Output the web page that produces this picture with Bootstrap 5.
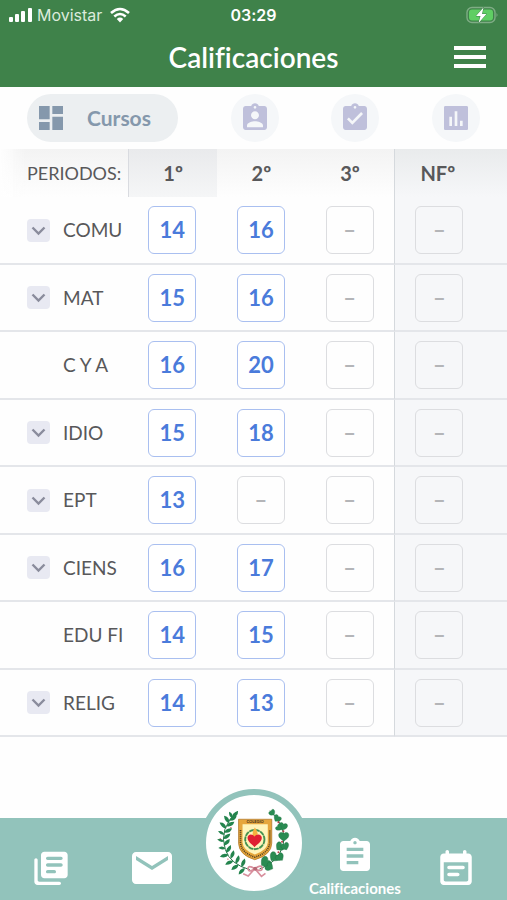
<!DOCTYPE html>
<html lang="es">
<head>
<meta charset="utf-8">
<meta name="viewport" content="width=device-width, initial-scale=1">
<title>Calificaciones</title>
<link href="https://cdn.jsdelivr.net/npm/bootstrap@5.3.0/dist/css/bootstrap.min.css" rel="stylesheet">
<style>
  body { font-family: Lato, "Liberation Sans", sans-serif; font-variant-ligatures: none; background: #fefefe; color: #58585a; }
  svg { display: block; }
  .app-header { background: #3f824a; color: #fff; height: 87px; }
  .status-bar { font-family: Inter, "Liberation Sans", sans-serif; font-size: 16px; line-height: 30px; height: 30px; padding: 0 9px; }
  .status-side { flex: 1 1 0; }
  .carrier { color: #dcebdc; }
  .clock { font-weight: 600; }
  .title-row { height: 54px; padding: 0 21px; }
  .title-side { flex: 1 1 0; }
  .app-title { font-size: 28px; line-height: 32px; font-weight: 600; }
  .bare-btn { background: none; border: 0; padding: 0; color: inherit; }
  .view-tabs { height: 62px; padding: 0 27px; }
  .view-pill { height: 48px; width: 151px; padding: 0 8px; gap: 20px; border: 0; border-radius: 24px; background: #eceff1; color: #8598ac; font-size: 21px; line-height: 24px; font-weight: 700; }
  .view-dot { width: 48px; height: 48px; border: 0; border-radius: 50%; background: #f5f7f9; color: #bfc0db; padding: 8px; }
  .grades { table-layout: fixed; width: 100%; border-collapse: separate; border-spacing: 0; }
  .grades .col-name { width: 25.3%; }
  .grades .col-term { width: 17.5%; }
  .grades thead th { height: 48px; padding: 0; font-size: 20px; line-height: 24px; font-weight: 700; text-align: center; background: linear-gradient(#f3f3f3, #fefefe); }
  .grades thead th.periods { font-weight: 400; font-size: 18px; text-align: left; padding-left: 27px; white-space: nowrap; background: linear-gradient(90deg, #fefefe, transparent 20%), linear-gradient(#f3f3f3, #fefefe); }
  .grades thead th.current { border-left: 1px solid #d9dbe0; background: linear-gradient(#e9eaec, #f5f6f7); }
  .grades thead th.final { border-left: 1px solid #d5d9dd; background: linear-gradient(#e9ebec, #f6f7f9); text-align: left; padding-left: 25px; }
  .grades tbody td, .grades tbody th { height: 67px; padding: 0; border-bottom: 2px solid #e4e6ea; vertical-align: middle; }
  .grades tbody tr:nth-child(odd) > * { height: 68px; }
  .grades tbody td { padding-left: 20px; }
  .grades tbody td.final { border-left: 1px solid #d5d9dd; background: #f6f7f9; }
  .course { padding-left: 27px; padding-right: 5px; gap: 13px; font-size: 19px; line-height: 24px; font-weight: 400; }
  .course-name { overflow: hidden; white-space: nowrap; flex: 1 1 0; }
  .expander { width: 23px; height: 23px; flex: none; border-radius: 4px; background: #e8e9f2; color: #8a8c9c; }
  .grade { display: flex; align-items: center; justify-content: center; width: 48px; height: 48px; border: 1px solid #a9bff0; border-radius: 6px; background: #fff; color: #4a7bdb; font-size: 22px; line-height: 24px; font-weight: 700; }
  .grade.empty { border-color: #dcdde0; background: transparent; color: #b4b5b8; }
  .tab-bar { background: #92c3bb; color: #fff; height: 82px; }
  .tab-bar a { color: #fff; text-decoration: none; flex: 1 1 0; min-width: 0; height: 82px; }
  .tab-label { font-size: 15px; line-height: 16px; font-weight: 700; }
  .crest { width: 108px; height: 108px; flex: none; margin-top: -29px; border: 6px solid #92c3bb; border-radius: 50%; background: #fff; }
</style>
<script src="https://cdn.jsdelivr.net/npm/bootstrap@5.3.0/dist/js/bootstrap.bundle.min.js"></script>
</head>
<body>
<div class="d-flex flex-column min-vh-100">
  <header class="app-header">
    <div class="status-bar d-flex align-items-center">
      <div class="status-side d-flex align-items-center">
        <svg width="24" height="16" viewBox="0 0 24 16" fill="#fff" aria-hidden="true"><rect x="0" y="10" width="4" height="5" rx="1"/><rect x="6" y="7" width="4" height="8" rx="1"/><rect x="12" y="4" width="4" height="11" rx="1"/><rect x="19" y="1" width="4" height="14" rx="1"/></svg>
        <span class="carrier ms-1">Movistar</span>
        <svg class="ms-2" width="20" height="16" viewBox="0 0 20 16" fill="none" stroke="#fff" stroke-width="2.6" aria-hidden="true"><path d="M1 6q9-8 18 0M4.300 9.500q5.700-5 11.400 0"/><path d="M6.800 12q3.200-2.800 6.400 0L10 15.500z" fill="#fff" stroke="none"/></svg>
      </div>
      <span class="clock">03:29</span>
      <div class="status-side d-flex justify-content-end">
        <svg width="32" height="18" viewBox="0 0 32 18" aria-hidden="true"><rect x="1" y="1.500" width="28" height="15" rx="5" fill="none" stroke="#7fac85" stroke-width="1.400"/><rect x="3" y="3.500" width="24" height="11" rx="3" fill="#5fce63"/><path d="M30.500 7v4q2-2 0-4z" fill="#7fac85"/><path d="M17.500 1.500 10 10h4.500l-2 7L20.500 8H16z" fill="#fff" stroke="#3f824a" stroke-width="1" paint-order="stroke"/></svg>
      </div>
    </div>
    <div class="title-row d-flex align-items-center">
      <div class="title-side"></div>
      <h1 class="app-title m-0">Calificaciones</h1>
      <div class="title-side d-flex justify-content-end">
        <button class="bare-btn" type="button" aria-label="Menú"><svg width="32" height="24" viewBox="0 0 32 24" fill="currentColor"><path d="M0 1h32v4H0zM0 10h32v4H0zM0 19h32v4H0z"/></svg></button>
      </div>
    </div>
  </header>

  <nav class="view-tabs d-flex align-items-center justify-content-between" aria-label="Vistas">
    <button class="view-pill d-flex align-items-center" type="button"><svg width="32" height="32" viewBox="0 0 24 24" fill="currentColor"><path d="M3 13h8V3H3v10zm0 8h8v-6H3v6zm10 0h8V11h-8v10zm0-18v6h8V3h-8z"/></svg>Cursos</button>
    <button class="view-dot" type="button" aria-label="Alumno"><svg width="32" height="32" viewBox="0 0 24 24" fill="currentColor"><path d="M19 3h-4.180C14.400 1.840 13.300 1 12 1c-1.300 0-2.400.84-2.820 2H5c-1.100 0-2 .9-2 2v14c0 1.100.9 2 2 2h14c1.100 0 2-.9 2-2V5c0-1.100-.9-2-2-2zm-7 0c.55 0 1 .45 1 1s-.45 1-1 1-1-.45-1-1 .45-1 1-1zm0 4c1.660 0 3 1.340 3 3s-1.340 3-3 3-3-1.340-3-3 1.340-3 3-3zm6 12H6v-1.400c0-2 4-3.100 6-3.100s6 1.100 6 3.100V19z"/></svg></button>
    <button class="view-dot" type="button" aria-label="Tareas"><svg width="32" height="32" viewBox="0 0 24 24" fill="currentColor"><path d="M19 3h-4.180C14.400 1.840 13.300 1 12 1c-1.300 0-2.400.84-2.820 2H5c-1.100 0-2 .9-2 2v14c0 1.100.9 2 2 2h14c1.100 0 2-.9 2-2V5c0-1.100-.9-2-2-2zm-7 0c.55 0 1 .45 1 1s-.45 1-1 1-1-.45-1-1 .45-1 1-1zm-2 14l-4-4 1.410-1.410L10 14.170l6.590-6.590L18 9l-8 8z"/></svg></button>
    <button class="view-dot" type="button" aria-label="Estadísticas"><svg width="32" height="32" viewBox="0 0 24 24" fill="currentColor"><path d="M20 3H4c-.55 0-1 .45-1 1v16c0 .55.450 1 1 1h16c.55 0 1-.45 1-1V4c0-.55-.45-1-1-1zM9 18H7v-7h2v7zm4 0h-2V7h2v11zm4 0h-2v-4h2v4z"/></svg></button>
  </nav>

  <main>
    <table class="grades">
      <colgroup><col class="col-name"><col class="col-term"><col class="col-term"><col class="col-term"><col></colgroup>
      <thead><tr><th class="periods" scope="col">PERIODOS:</th><th class="current" scope="col">1º</th><th scope="col">2º</th><th scope="col">3º</th><th class="final" scope="col">NFº</th></tr></thead>
      <tbody id="gradeRows"></tbody>
    </table>
  </main>

  <nav class="tab-bar d-flex mt-auto" aria-label="Principal">
    <a href="#" class="d-flex justify-content-center align-items-end pb-2" aria-label="Noticias"><svg width="40" height="44" viewBox="0 0 24 26" fill="currentColor"><path d="M3 6c-.55 0-1 .45-1 1v13c0 1.100.9 2 2 2h13c.55 0 1-.45 1-1s-.45-1-1-1H5c-.55 0-1-.45-1-1V7c0-.55-.45-1-1-1zm17-4H8c-1.100 0-2 .9-2 2v12c0 1.100.9 2 2 2h12c1.100 0 2-.9 2-2V4c0-1.100-.9-2-2-2zm-2 9h-8c-.55 0-1-.45-1-1s.45-1 1-1h8c.55 0 1 .45 1 1s-.45 1-1 1zm-4 4h-4c-.55 0-1-.45-1-1s.45-1 1-1h4c.55 0 1 .45 1 1s-.45 1-1 1zm4-8h-8c-.55 0-1-.45-1-1s.45-1 1-1h8c.55 0 1 .45 1 1s-.45 1-1 1z"/></svg></a>
    <a href="#" class="d-flex justify-content-center align-items-end pb-2" aria-label="Mensajes"><svg width="48" height="48" viewBox="0 0 24 24" fill="currentColor"><path d="M20 4H4c-1.100 0-2 .9-2 2v12c0 1.100.9 2 2 2h16c1.100 0 2-.9 2-2V6c0-1.100-.9-2-2-2zm0 4l-8 5-8-5V6l8 5 8-5v2z"/></svg></a>
    <a href="#" class="d-flex justify-content-center" aria-label="Inicio"><span class="crest">
      <svg width="96" height="96" viewBox="33 45 289 289" aria-hidden="true">
        <defs>
          <path id="leafLong" d="M-1 0Q5-13 24-10Q17 6-1 0z" fill="#23844d"/>
          <path id="leafWide" d="M0 15C-8 9-17 4-15-6C-12-13-4-13 0-7C4-13 13-13 15-6C17 4 8 9 0 15z" fill="#2a8b52" stroke="#196a3b" stroke-width="1"/>
        </defs>
        <path d="M128 94Q70 145 91 209Q105 253 165 270" fill="none" stroke="#2b7247" stroke-width="3"/>
        <g>
          <use href="#leafLong" transform="translate(112 112) rotate(-25)"/><use href="#leafLong" transform="translate(112 114) rotate(-95) scale(.8)"/>
          <use href="#leafLong" transform="translate(104 122) rotate(-12)"/><use href="#leafLong" transform="translate(103 128) rotate(-105)"/>
          <use href="#leafLong" transform="translate(96 139) rotate(-8)"/><use href="#leafLong" transform="translate(94 144) rotate(-118)"/>
          <use href="#leafLong" transform="translate(89 158) rotate(-8)"/><use href="#leafLong" transform="translate(88 163) rotate(-132) scale(.8)"/>
          <use href="#leafLong" transform="translate(86 177) rotate(-16)"/><use href="#leafLong" transform="translate(87 184) rotate(-144) scale(.8)"/>
          <use href="#leafLong" transform="translate(87 197) rotate(-25)"/><use href="#leafLong" transform="translate(91 205) rotate(-157) scale(.8)"/>
          <use href="#leafLong" transform="translate(95 218) rotate(-38)"/><use href="#leafLong" transform="translate(100 225) rotate(-170)"/>
          <use href="#leafLong" transform="translate(108 236) rotate(-48)"/><use href="#leafLong" transform="translate(114 243) rotate(175)"/>
          <use href="#leafLong" transform="translate(124 251) rotate(-50)"/><use href="#leafLong" transform="translate(130 255) rotate(165)"/>
          <use href="#leafLong" transform="translate(141 261) rotate(-48)"/><use href="#leafLong" transform="translate(149 265) rotate(155)"/>
        </g>
        <path d="M226 92Q280 145 265 197Q250 248 194 268" fill="none" stroke="#2b7247" stroke-width="3"/>
        <g>
          <use href="#leafWide" transform="translate(232 98) rotate(-40) scale(.65)"/><use href="#leafWide" transform="translate(248 115) rotate(35) scale(.75)"/>
          <use href="#leafWide" transform="translate(265 139) rotate(15) scale(.85)"/><use href="#leafWide" transform="translate(252 143) rotate(-50) scale(.65)"/>
          <use href="#leafWide" transform="translate(267 169) scale(1)"/><use href="#leafWide" transform="translate(256 200) rotate(45) scale(.9)"/>
          <use href="#leafWide" transform="translate(271 199) rotate(-25) scale(.8)"/><use href="#leafWide" transform="translate(239 231) rotate(42) scale(1)"/>
          <use href="#leafWide" transform="translate(255 232) rotate(-40) scale(.85)"/><use href="#leafWide" transform="translate(213 247) rotate(50) scale(1.100)"/>
          <use href="#leafWide" transform="translate(223 261) rotate(-60) scale(.85)"/>
        </g>
        <g fill="#b83c45"><circle cx="108" cy="143" r="2"/><circle cx="76" cy="177" r="2"/><circle cx="99" cy="238" r="2"/><circle cx="251" cy="127" r="3"/><circle cx="266" cy="154" r="3"/><circle cx="262" cy="186" r="3"/><circle cx="251" cy="217" r="3"/></g>
        <path d="M131 118H231V190Q230 225 180 240Q132 225 131 190z" fill="#e6a63c" stroke="#a66e20" stroke-width="2"/>
        <path d="M143 133H219V187Q218 211 180 224Q144 211 143 187z" fill="#fff4ba"/>
        <path d="M137 150V188Q139 219 180 232Q223 219 225 188V150" fill="none" stroke="#493a22" stroke-width="5" stroke-dasharray="3 3"/>
        <text x="181" y="130" text-anchor="middle" font-size="12" font-weight="700" fill="#382d1c">COLEGIO</text>
        <circle cx="180" cy="179" r="29" fill="none" stroke="#60a460" stroke-width="6" stroke-dasharray="14 3"/>
        <circle cx="180" cy="179" r="29" fill="none" stroke="#237b42" stroke-width="2"/>
        <path d="M180 143Q170 158 175 170H186Q193 157 180 143z" fill="#f5b13e"/>
        <path d="M179 202C172 194 158 186 158 174C158 162 173 160 179 170C185 160 201 162 201 174C201 186 187 194 179 202z" fill="#df2032"/>
        <path d="M180 267Q158 253 160 269Q162 279 180 267Q200 252 202 266Q201 278 180 267L160 289L145 282M180 267L200 290L212 281" fill="none" stroke="#d88f9d" stroke-width="5"/>
        <circle cx="181" cy="267" r="6" fill="#b66875"/>
      </svg></span></a>
    <a href="#" class="d-flex flex-column align-items-center justify-content-end pb-1" aria-current="page"><svg class="mb-1" width="40" height="40" viewBox="0 0 24 24" fill="currentColor" aria-hidden="true"><path d="M19 3h-4.180C14.400 1.840 13.300 1 12 1c-1.300 0-2.400.84-2.820 2H5c-1.100 0-2 .9-2 2v14c0 1.100.9 2 2 2h14c1.100 0 2-.9 2-2V5c0-1.100-.9-2-2-2zm-7 0c.55 0 1 .45 1 1s-.45 1-1 1-1-.45-1-1 .45-1 1-1zm2 14H7v-2h7v2zm3-4H7v-2h10v2zm0-4H7V7h10v2z"/></svg><span class="tab-label">Calificaciones</span></a>
    <a href="#" class="d-flex justify-content-center align-items-end pb-2" aria-label="Agenda"><svg width="42" height="44" viewBox="0 0 24 25" fill="currentColor"><path d="M16 10H8c-.55 0-1 .45-1 1s.45 1 1 1h8c.55 0 1-.45 1-1s-.45-1-1-1zm3-7h-1V2c0-.55-.45-1-1-1s-1 .45-1 1v1H8V2c0-.55-.45-1-1-1s-1 .45-1 1v1H5c-1.110 0-2 .9-2 2v14c0 1.100.89 2 2 2h14c1.100 0 2-.9 2-2V5c0-1.100-.9-2-2-2zm-1 16H6c-.55 0-1-.45-1-1V8h14v10c0 .55-.45 1-1 1zm-5-5H8c-.55 0-1 .45-1 1s.45 1 1 1h5c.55 0 1-.45 1-1s-.45-1-1-1z"/></svg></a>
  </nav>
</div>
<script>
  const courses = [
    ["COMU", 14, 16, true], ["MAT", 15, 16, true], ["C Y A", 16, 20, false], ["IDIO", 15, 18, true],
    ["EPT", 13, null, true], ["CIENS", 16, 17, true], ["EDU FI", 14, 15, false], ["RELIG", 14, 13, true]
  ];
  const box = g => g ? `<span class="grade">${g}</span>` : `<span class="grade empty">–</span>`;
  const chevron = `<svg width="23" height="23" viewBox="0 0 23 23" fill="none" stroke="currentColor" stroke-width="2.400"><path d="M5.500 8.500l6 6 6-6"/></svg>`;
  document.getElementById("gradeRows").innerHTML = courses.map(([name, a, b, open]) => `
    <tr><th scope="row"><div class="course d-flex align-items-center">
      ${open ? `<button class="bare-btn expander" type="button" aria-label="Desplegar ${name}">${chevron}</button>` : `<span class="expander invisible"></span>`}
      <span class="course-name">${name}</span></div></th>
      <td>${box(a)}</td><td>${box(b)}</td><td>${box()}</td><td class="final">${box()}</td></tr>`).join("");
</script>
</body>
</html>
